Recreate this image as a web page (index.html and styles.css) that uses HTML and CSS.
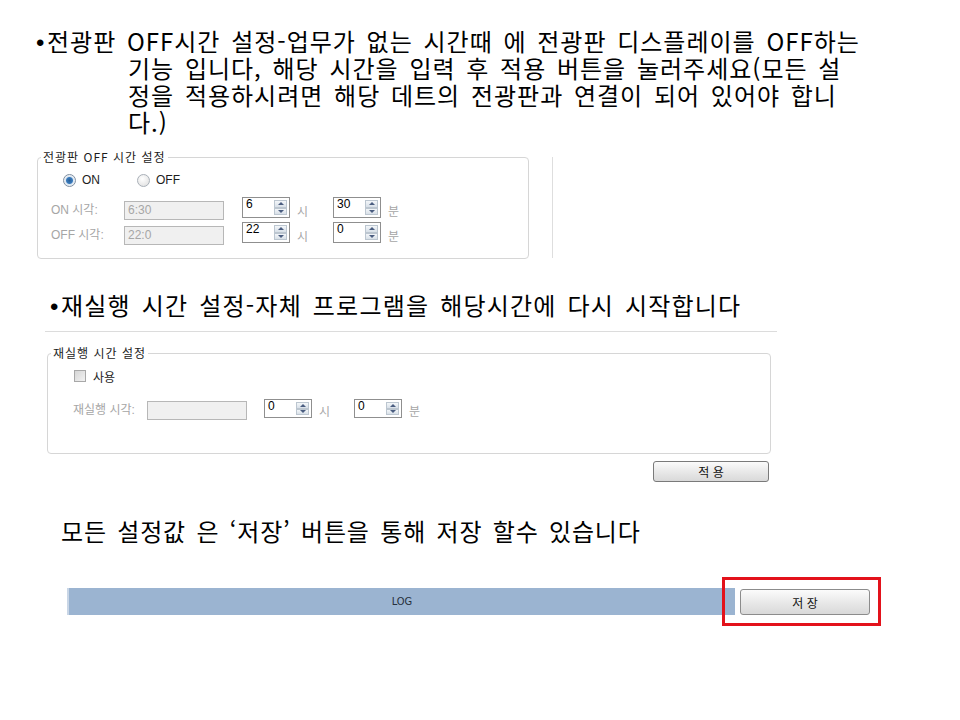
FILE: index.html
```html
<!DOCTYPE html>
<html lang="ko">
<head>
    <meta charset="UTF-8">
    <title>전광판 설정 안내</title>
    <link rel="stylesheet" href="styles.css">
</head>
<body>
    <div class="slide">
        <!-- 전광판 OFF 시간 설명 -->
        <p class="note note-first"><span class="bullet">•</span>전광판 OFF시간 설정-업무가 없는 시간때 에 전광판 디스플레이를 OFF하는<br>기능 입니다, 해당 시간을 입력 후 적용 버튼을 눌러주세요(모든 설<br>정을 적용하시려면 해당 데트의 전광판과 연결이 되어 있어야 합니<br>다.)</p>

        <div class="panel-row">
            <fieldset class="group group-off">
                <legend>전광판 OFF 시간 설정</legend>
                <div class="radio-row">
                    <span class="radio-item"><span class="radio checked"></span>ON</span>
                    <span class="radio-item"><span class="radio"></span>OFF</span>
                </div>
                <div class="time-row">
                    <span class="label">ON 시각:</span>
                    <span class="textbox">6:30</span>
                    <span class="spin">6<span class="spin-btns"><i class="up"></i><i class="down"></i></span></span>
                    <span class="unit">시</span>
                    <span class="spin spin-min">30<span class="spin-btns"><i class="up"></i><i class="down"></i></span></span>
                    <span class="unit">분</span>
                </div>
                <div class="time-row">
                    <span class="label">OFF 시각:</span>
                    <span class="textbox">22:0</span>
                    <span class="spin">22<span class="spin-btns"><i class="up"></i><i class="down"></i></span></span>
                    <span class="unit">시</span>
                    <span class="spin spin-min">0<span class="spin-btns"><i class="up"></i><i class="down"></i></span></span>
                    <span class="unit">분</span>
                </div>
            </fieldset>
            <div class="vsep"></div>
        </div>

        <!-- 재실행 시간 설명 -->
        <p class="note note-second"><span class="bullet">•</span>재실행 시간 설정-자체 프로그램을 해당시간에 다시 시작합니다</p>
        <div class="hline"></div>

        <fieldset class="group group-restart">
            <legend>재실행 시간 설정</legend>
            <div class="check-row">
                <span class="checkbox"></span>사용
            </div>
            <div class="time-row restart-row">
                <span class="label">재실행 시각:</span>
                <span class="textbox"></span>
                <span class="spin">0<span class="spin-btns"><i class="up"></i><i class="down"></i></span></span>
                <span class="unit">시</span>
                <span class="spin spin-min">0<span class="spin-btns"><i class="up"></i><i class="down"></i></span></span>
                <span class="unit">분</span>
            </div>
        </fieldset>

        <button class="win-button apply-button">적 용</button>

        <p class="note note-third">모든 설정값 은 ‘저장’ 버튼을 통해 저장 할수 있습니다</p>

        <div class="bottom-row">
            <div class="logbar">LOG</div>
            <div class="save-wrap">
                <button class="win-button save-button">저 장</button>
                <div class="highlight"></div>
            </div>
        </div>
    </div>
</body>
</html>
```

FILE: styles.css
```css
body {
    margin: 0;
    background-color: #fff;
    font-family: "Noto Sans CJK KR", "Liberation Sans", sans-serif;
    color: #000;
}
.slide {
    width: 960px;
    height: 720px;
    padding-top: 27px;
    box-sizing: border-box;
    overflow: hidden;
}

/* slide text */
.note {
    margin: 0;
    height: 27px;
    font-size: 24px;
    line-height: 27px;
    letter-spacing: 1px;
    word-spacing: 3px;
    white-space: nowrap;
    color: #000;
}
.bullet {
    display: inline-block;
    width: 11px;
    text-indent: 0;
    line-height: 20px;
    letter-spacing: 0;
    word-spacing: 0;
    font-family: "Liberation Sans", sans-serif;
}
.note-first {
    height: 108px;
    margin-left: 36px;
    padding-left: 92px;
    text-indent: -92px;
}
.note-second {
    margin-top: 32px;
    margin-left: 50px;
    letter-spacing: 1.2px;
}
.note-third {
    margin-top: 35px;
    margin-left: 61px;
    letter-spacing: 0.8px;
}
.hline {
    margin: 13px 0 0 45px;
    width: 732px;
    height: 1px;
    background-color: #dcdcdc;
}

/* group boxes */
.panel-row {
    display: flex;
    margin-top: 15px;
    margin-left: 37px;
}
.group {
    margin: 0;
    padding: 0;
    min-width: 0;
    border: 1px solid #d6d6d6;
    border-radius: 4px;
    font-size: 12px;
    color: #a6a6a6;
}
.group legend {
    margin-left: 3px;
    padding: 0 2px;
    font-size: 12px;
    line-height: 14px;
    letter-spacing: 1px;
    color: #1c1c1c;
}
.group-off {
    width: 492px;
    box-sizing: border-box;
    padding-bottom: 11px;
}
.group-restart {
    width: 724px;
    box-sizing: border-box;
    margin-top: 14px;
    margin-left: 47px;
    padding-bottom: 32px;
}
.vsep {
    width: 1px;
    height: 101px;
    margin-top: 7px;
    margin-left: 23px;
    background-color: #dedede;
}

/* radio / checkbox */
.radio-row {
    display: flex;
    align-items: center;
    height: 16px;
    margin-top: 8px;
    padding-left: 25px;
    color: #1c1c1c;
    font-family: "Liberation Sans", sans-serif;
}
.radio-item {
    display: flex;
    align-items: center;
    width: 74px;
}
.radio {
    width: 11px;
    height: 11px;
    margin-right: 6px;
    border: 1px solid #a9b0b8;
    border-radius: 50%;
    background: radial-gradient(circle at 40% 35%, #ffffff, #dcdcdc);
}
.radio.checked {
    border-color: #7f8ea0;
    background: radial-gradient(circle, #2b5f95 0, #3a7bbd 3px, #dbe6f1 4px, #f4f7fa 6px);
}
.check-row {
    display: flex;
    align-items: center;
    height: 16px;
    margin-top: 8px;
    padding-left: 26px;
    color: #1c1c1c;
}
.checkbox {
    width: 10px;
    height: 10px;
    margin-right: 7px;
    border: 1px solid #a8a8a8;
    background: linear-gradient(135deg, #d6d6d6, #f2f2f2);
}

/* time rows */
.time-row {
    display: flex;
    align-items: flex-start;
    height: 25px;
    padding-left: 13px;
}
.radio-row + .time-row {
    margin-top: 9px;
}
.time-row .label {
    width: 73px;
    margin-top: 4px;
    line-height: 19px;
    font-family: "Liberation Sans", "Noto Sans CJK KR", sans-serif;
}
.textbox {
    width: 100px;
    height: 19px;
    margin-top: 4px;
    padding-left: 3px;
    box-sizing: border-box;
    border: 1px solid #b7b7b7;
    background-color: #f0f0f0;
    line-height: 17px;
    font-family: "Liberation Sans", sans-serif;
    color: #a6a6a6;
}
.spin {
    display: flex;
    width: 48px;
    height: 21px;
    margin-left: 18px;
    padding-left: 3px;
    box-sizing: border-box;
    border: 1px solid #8f8f8f;
    background-color: #fff;
    line-height: 13px;
    font-family: "Liberation Sans", sans-serif;
    color: #000;
}
.spin-min {
    margin-left: 0;
}
.spin-btns {
    display: flex;
    flex-direction: column;
    width: 13px;
    margin: 2px 2px 2px auto;
}
.spin-btns i {
    flex: 1;
    display: flex;
    align-items: center;
    justify-content: center;
    border: 1px solid #bcc6d0;
    background: linear-gradient(#f3f6f9, #d8e0e8);
}
.spin-btns i::after {
    content: "";
    border-left: 3px solid transparent;
    border-right: 3px solid transparent;
}
.spin-btns .up::after {
    border-bottom: 3px solid #4a5d80;
}
.spin-btns .down::after {
    border-top: 3px solid #4a5d80;
}
.unit {
    width: 36px;
    margin-top: 4px;
    margin-left: 7px;
    line-height: 19px;
}
.restart-row {
    margin-top: 15px;
    height: 22px;
    padding-left: 25px;
}
.restart-row .label {
    width: 74px;
}
.restart-row .textbox {
    margin-top: 2px;
}
.restart-row .spin {
    height: 19px;
    margin-left: 17px;
}
.restart-row .spin-min {
    margin-left: 0;
}
.restart-row .label,
.restart-row .unit {
    margin-top: 2px;
}
.restart-row .unit {
    width: 35px;
    margin-left: 7px;
}

/* buttons */
.win-button {
    display: block;
    padding: 0;
    border: 1px solid #7a7a7a;
    border-radius: 3px;
    background: linear-gradient(#fbfbfb, #e9e9e9 50%, #d9d9d9);
    font-family: "Noto Sans CJK KR", sans-serif;
    font-size: 12px;
    color: #111;
}
.apply-button {
    width: 116px;
    height: 21px;
    margin-top: 7px;
    margin-left: 653px;
    line-height: 19px;
}

/* bottom bar */
.bottom-row {
    display: flex;
    margin-top: 44px;
    margin-left: 67px;
}
.logbar {
    width: 668px;
    height: 27px;
    border-left: 2px solid #c9d6e6;
    box-sizing: border-box;
    background-color: #9bb4d1;
    text-align: center;
    line-height: 27px;
    font-family: "DejaVu Sans Condensed", "DejaVu Sans", sans-serif;
    font-size: 11px;
    color: #26303c;
}
.save-wrap {
    position: relative;
    margin-left: 5px;
}
.save-button {
    width: 130px;
    height: 26px;
    margin-top: 1px;
    border-color: #8c8c8c;
}
.highlight {
    position: absolute;
    left: -18px;
    top: -11px;
    width: 159px;
    height: 49px;
    box-sizing: border-box;
    border: 3px solid #e3121b;
}
```
